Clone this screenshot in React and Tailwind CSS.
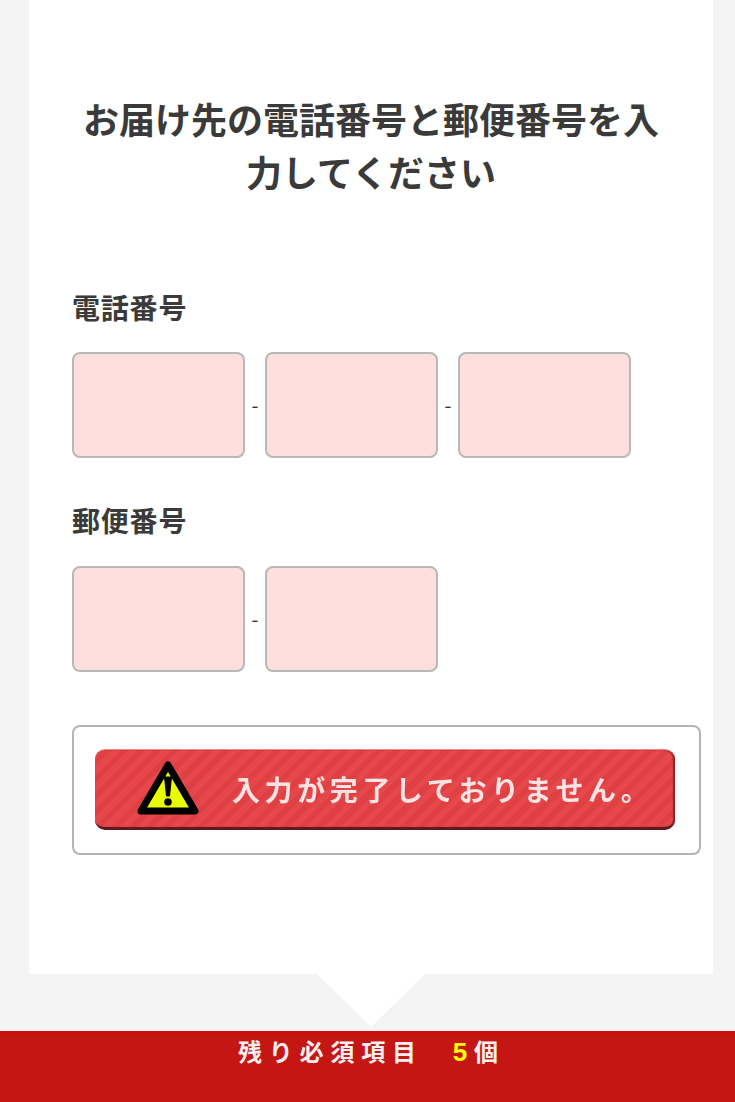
import React from 'react';

const JP = 'font-["Noto_Sans_CJK_JP","Noto_Sans",sans-serif]';

function Box() {
  return (
    <input
      type="tel"
      className="block w-[173px] h-[106px] bg-[#fedfde] border-2 border-[#b8b8b8] rounded-lg"
    />
  );
}

function Dash() {
  return <span className="w-[20px] text-center text-[20px] leading-none text-[#333]">-</span>;
}

function WarningIcon() {
  return (
    <svg width="66" height="58" viewBox="0 0 66 58" className="shrink-0">
      <path d="M33 5 L60 51 L6 51 Z" fill="#e8ff00" stroke="#000" strokeWidth="7" strokeLinejoin="round" />
      <path d="M29.5 17 h7 l-2 19 h-3 Z" fill="#000" stroke="#000" strokeWidth="1" strokeLinejoin="round" />
      <circle cx="33" cy="42" r="3.8" fill="#000" />
    </svg>
  );
}

export default function App() {
  return (
    <div className={`${JP} relative w-[735px] h-[1102px] overflow-hidden bg-[#f4f4f4] flex flex-col`}>
      <main className="ml-[29px] w-[684px] h-[974px] shrink-0 bg-white pt-[92px]">
        <h1 className="w-[600px] mx-auto text-center text-[36px] leading-[53px] font-bold text-[#3a3a3a]">
          お届け先の電話番号と郵便番号を入力してください
        </h1>

        <div className="pl-[43px] pt-[89px]">
          <h2 className="text-[28px] leading-[40px] font-bold tracking-[0.8px] text-[#3a3a3a]">電話番号</h2>
          <div className="mt-[25px] flex items-center">
            <Box />
            <Dash />
            <Box />
            <Dash />
            <Box />
          </div>

          <h2 className="mt-[42px] text-[28px] leading-[40px] font-bold tracking-[0.8px] text-[#3a3a3a]">郵便番号</h2>
          <div className="mt-[26px] flex items-center">
            <Box />
            <Dash />
            <Box />
          </div>

          <div className="mt-[53px] w-[629px] h-[130px] border-2 border-[#b4b4b4] rounded-lg bg-white pl-[21px] pt-[22px]">
            <div className="w-[580px] h-[81px] flex items-center pl-[40px] rounded-[10px] border-t border-t-[#f08a8a] border-b-[3px] border-b-[#5e1a1c] shadow-[inset_-2px_0_1px_#8a2426] bg-[#e34245] bg-[repeating-linear-gradient(135deg,#e5474a_0px,#e5474a_6px,#df4043_6px,#df4043_12px)] blur-[0.4px]">
              <WarningIcon />
              <span className="ml-[31px] whitespace-nowrap text-[28px] font-bold tracking-[4.6px] text-[#fbe3e3]">
                入力が完了しておりません。
              </span>
            </div>
          </div>
        </div>
      </main>

      {/* speech-bubble notch */}
      <div className="absolute left-[317px] top-[974px] w-0 h-0 border-l-[54px] border-r-[54px] border-t-[53px] border-l-transparent border-r-transparent border-t-white" />

      <footer className="mt-[57px] flex-1 bg-[#c41714] border-t-4 border-t-[#cc0f0c] flex justify-start pl-[238px]">
        <p className="text-[24px] leading-[32px] font-bold tracking-[6.8px] text-[#f8f0f0] whitespace-nowrap">
          残り必須項目
          <span className="ml-[30px] font-['Liberation_Sans'] text-[#ffff00] text-[26px] tracking-[6.8px]">5</span>
          個
        </p>
      </footer>
    </div>
  );
}
